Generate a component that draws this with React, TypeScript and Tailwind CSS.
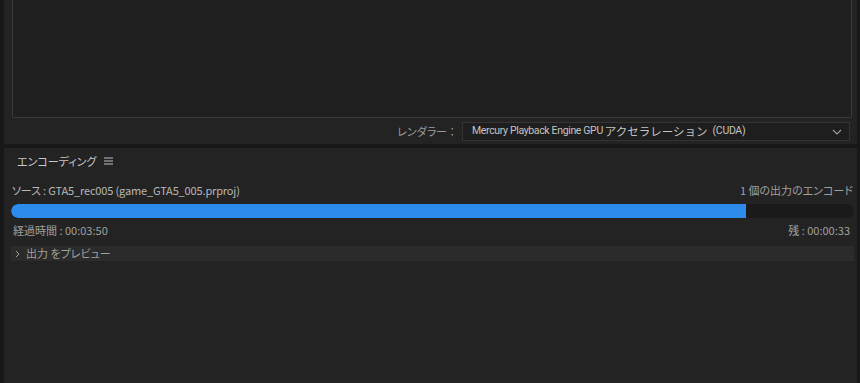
import React from "react";

const jp = { fontFamily: '"Noto Sans CJK JP", "Noto Sans", sans-serif' };

export default function App() {
  return (
    <div
      className="w-[860px] h-[383px] bg-[#181818] flex flex-col gap-[4px] pl-[4px] pr-[3px] overflow-hidden text-[#a8a8a8] [font-feature-settings:'palt']"
      style={jp}
    >
      {/* top panel */}
      <div className="h-[144px] bg-[#232323] flex flex-col pl-[8px] pr-[5px]">
        <div className="h-[118px] border-x border-b border-[#3a3a3a] bg-[#202020] rounded-b-[2px]" />
        <div className="flex items-center justify-end mt-[4px] h-[19px] gap-[7px] pr-[2px]">
          <span className="text-[11px] text-[#9a9a9a]">レンダラー ：</span>
          <div className="w-[388px] h-[19px] border border-[#333] bg-[#1e1e1e] flex items-center justify-between pl-[9px] pr-[6px]">
            <span className="text-[11px] text-[#c4c4c4] leading-none flex items-center">
              <span className="font-['Roboto','Noto_Sans',sans-serif] text-[10.5px] tracking-[-0.35px]">
                Mercury Playback Engine GPU
              </span>
              <span className="ml-[2px] text-[11.5px] [font-feature-settings:normal]">アクセラレーション</span>
              <span className="ml-[5px] font-['Roboto','Noto_Sans',sans-serif] text-[10.5px] tracking-[-0.3px]">
                (CUDA)
              </span>
            </span>
            <svg width="10" height="6" viewBox="0 0 10 6" className="mr-[1px]">
              <path d="M1 1 L5 5 L9 1" fill="none" stroke="#a0a0a0" strokeWidth="1.1" />
            </svg>
          </div>
        </div>
      </div>

      {/* bottom panel */}
      <div className="flex-1 bg-[#232323] flex flex-col pl-[7px] pr-[3px]">
        <div className="flex items-center h-[24px] mt-[1px] pl-[6px] gap-[8px]">
          <span className="text-[11px] text-[#c8c8c8]">エンコーディング</span>
          <svg width="9" height="8" viewBox="0 0 9 8">
            <path d="M0 1h9M0 4h9M0 7h9" stroke="#c0c0c0" strokeWidth="1" />
          </svg>
        </div>
        <div className="flex items-center justify-between h-[14px] mt-[10px] px-[1px]">
          <span className="text-[11px] text-[#b8b8b8] tracking-[-0.15px]">ソース : GTA5_rec005 (game_GTA5_005.prproj)</span>
          <span className="text-[11px] text-[#a0a0a0]">1 個の出力のエンコード</span>
        </div>
        <div className="mt-[7px] h-[14px] rounded-full bg-[#1a1a1a] overflow-hidden">
          <div className="h-full w-[735px] bg-[#2d8ceb] rounded-l-full" />
        </div>
        <div className="flex items-center justify-between h-[14px] mt-[5px] pl-[2px] pr-[4px]">
          <span className="text-[11px] text-[#a0a0a0]">経過時間 : 00:03:50</span>
          <span className="text-[11px] text-[#a0a0a0]">残 : 00:00:33</span>
        </div>
        <div className="mt-[9px] h-[15px] bg-[#2b2b2b] flex items-center pl-[4px] gap-[6px]">
          <svg width="5" height="8" viewBox="0 0 5 8">
            <path d="M1 1 L4 4 L1 7" fill="none" stroke="#a0a0a0" strokeWidth="1" />
          </svg>
          <span className="text-[11px] text-[#a0a0a0]">出力 をプレビュー</span>
        </div>
      </div>
    </div>
  );
}
